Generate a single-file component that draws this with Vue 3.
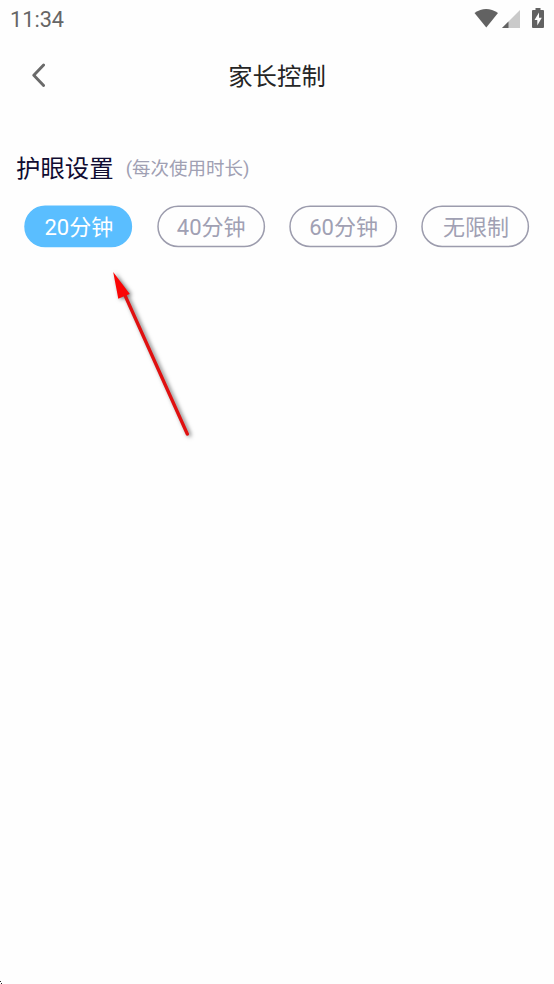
<script setup>
import { ref } from 'vue'
const options = ['20分钟', '40分钟', '60分钟', '无限制']
const selected = ref(0)
</script>

<template>
  <main class="screen">
    <div class="status">
      <span class="time">11:34</span>
      <div class="icons">
        <svg class="wifi" width="24" height="20" viewBox="0 0 24 20"><path d="M0.5 5Q12-3.2 24 5L12.3 19.5Z" fill="#626262" /></svg>
        <svg class="signal" width="18" height="18" viewBox="0 0 18 18"><path d="M18 0V18H0Z" fill="#cacaca" /><path d="M6.5 11.5V18H0Z" fill="#626262" /></svg>
        <svg class="battery" width="12" height="20" viewBox="0 0 12 20"><path d="M3.5 0h5v2H11q1 0 1 1v16q0 1-1 1H1q-1 0-1-1V3q0-1 1-1h2.5Z" fill="#626262" /><path d="M7 4.5L2.5 12H5.3V17.5L9.8 9.8H7Z" fill="#fff" /></svg>
      </div>
    </div>
    <header class="header">
      <button class="back" aria-label="返回">
        <svg width="14" height="25" viewBox="0 0 14 25"><path d="M12.6 2L2.8 12.2L12.6 22.4" fill="none" stroke="#6a6a6a" stroke-width="2.9" stroke-linecap="round" stroke-linejoin="round" /></svg>
      </button>
      <h1>家长控制</h1>
    </header>
    <section class="settings">
      <div class="heading">
        <h2>护眼设置</h2>
        <span class="note">(每次使用时长)</span>
      </div>
      <div class="options">
        <button v-for="(label, i) in options" :key="label" class="option" :class="{ active: selected === i }" @click="selected = i">
          <svg class="outline" width="109" height="43" viewBox="0 0 109 43"><rect x="1" y="1.3" width="106.4" height="40.2" rx="20.1" /></svg>
          <span class="label">{{ label }}</span>
        </button>
      </div>
    </section>
    <svg class="arrow" width="100" height="184" viewBox="0 0 100 184">
      <g class="arrow-shape">
        <path d="M23.5 32L87.3 174" stroke="#e01010" stroke-width="3.3" stroke-linecap="round" />
        <path d="M13.2 12L29.8 34L24.5 36L18.3 38.8Z" fill="#fa0505" />
      </g>
    </svg>
    <svg class="corner" width="3" height="4" viewBox="0 0 3 4"><path d="M0 1h1v1H0ZM1 3h1v1H1Z" fill="#222" /></svg>
  </main>
</template>

<style>
body { margin: 0; background: #fefefe; }
</style>

<style scoped>
.screen { position: relative; width: 554px; height: 984px; overflow: hidden; background: #fefefe; font-family: Roboto, "Noto Sans CJK SC", sans-serif; }
.status { display: flex; justify-content: space-between; height: 40px; padding: 0 10px; box-sizing: border-box; }
.time { padding-top: 7px; font-size: 21.7px; line-height: 25px; color: #666; }
.icons { display: flex; align-items: flex-start; }
.wifi { margin-top: 8px; }
.signal { margin: 10px 12px 0 4px; }
.battery { margin-top: 8px; }
.header { display: grid; grid-template-columns: 70px 1fr 70px; align-items: center; height: 72px; }
.back { display: flex; padding: 0 0 1px 31px; border: 0; background: none; }
h1 { margin: 0; padding-top: 2px; text-align: center; font-size: 24.4px; line-height: 36px; font-weight: 400; color: #262626; }
.settings { padding-top: 39px; }
.heading { display: flex; align-items: center; height: 36px; padding-left: 16px; gap: 12.2px; }
h2 { margin: 0; font-size: 24.4px; line-height: 36px; font-weight: 400; color: #100c32; }
.note { font-size: 18.5px; line-height: 28px; color: #a0a0b3; }
.options { display: grid; grid-template-columns: repeat(4, 109px); gap: 23.4px; padding: 18.4px 0 0 24.3px; }
.option { display: grid; height: 43px; padding: 0; border: 0; background: none; color: #a0a0b3; font: 400 22px/42px Roboto, "Noto Sans CJK SC", sans-serif; }
.outline, .label { grid-area: 1 / 1; }
.label { z-index: 1; padding-top: 2px; }
.outline rect { fill: none; stroke: #9c9cad; stroke-width: 1.5; }
.active { color: #fff; }
.active .outline rect { fill: #5abeff; stroke: #5abeff; }
.arrow { position: absolute; left: 100px; top: 260px; }
.arrow-shape { filter: drop-shadow(2px 1px 2px rgba(0, 0, 0, .55)); }
.corner { position: absolute; left: 0; bottom: 0; }
</style>
